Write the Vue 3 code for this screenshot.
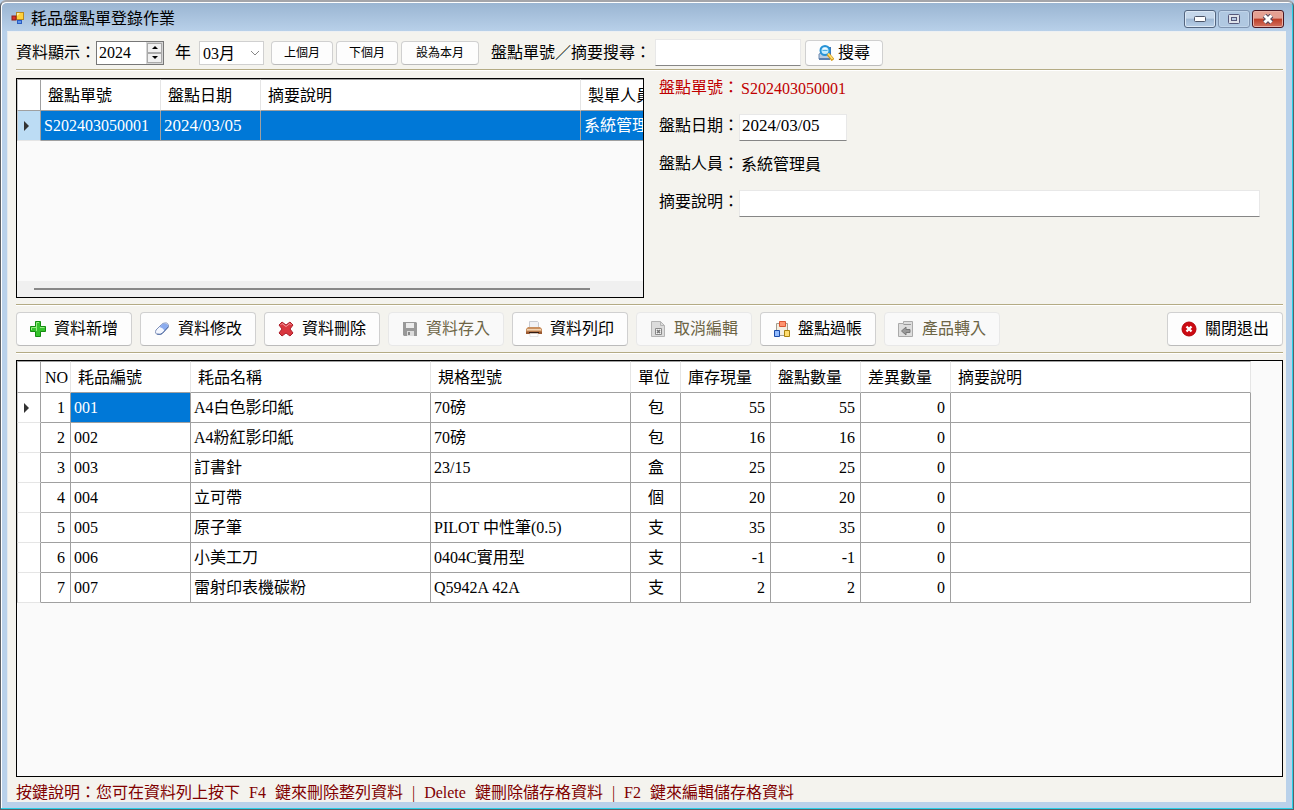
<script setup>
import { ref } from 'vue'

const year = ref(2024)
const month = ref('03月')
const months = Array.from({ length: 12 }, (_, i) => String(i + 1).padStart(2, '0') + '月')
const keyword = ref('')
const sheetDate = ref('2024/03/05')
const summary = ref('')

const jumps = ['上個月', '下個月', '設為本月']

const actions = [
  { icon: 'add', label: '資料新增', disabled: false },
  { icon: 'edit', label: '資料修改', disabled: false },
  { icon: 'remove', label: '資料刪除', disabled: false },
  { icon: 'save', label: '資料存入', disabled: true },
  { icon: 'print', label: '資料列印', disabled: false },
  { icon: 'cancel', label: '取消編輯', disabled: true },
  { icon: 'post', label: '盤點過帳', disabled: false },
  { icon: 'import', label: '產品轉入', disabled: true }
]

const items = [
  { no: 1, code: '001', name: 'A4白色影印紙', spec: '70磅', unit: '包', stock: 55, count: 55, diff: 0 },
  { no: 2, code: '002', name: 'A4粉紅影印紙', spec: '70磅', unit: '包', stock: 16, count: 16, diff: 0 },
  { no: 3, code: '003', name: '訂書針', spec: '23/15', unit: '盒', stock: 25, count: 25, diff: 0 },
  { no: 4, code: '004', name: '立可帶', spec: '', unit: '個', stock: 20, count: 20, diff: 0 },
  { no: 5, code: '005', name: '原子筆', spec: 'PILOT 中性筆(0.5)', unit: '支', stock: 35, count: 35, diff: 0 },
  { no: 6, code: '006', name: '小美工刀', spec: '0404C實用型', unit: '支', stock: -1, count: -1, diff: 0 },
  { no: 7, code: '007', name: '雷射印表機碳粉', spec: 'Q5942A 42A', unit: '支', stock: 2, count: 2, diff: 0 }
]

const hints = ['按鍵說明：您可在資料列上按下', 'F4', '鍵來刪除整列資料', '|', 'Delete', '鍵刪除儲存格資料', '|', 'F2', '鍵來編輯儲存格資料']
</script>

<template>
  <div class="window">
    <header class="titlebar">
      <svg class="app-icon" width="14" height="14" viewBox="0 0 14 14" aria-hidden="true">
        <rect x="5.5" y="1.5" width="7" height="7" fill="#ffd23c" stroke="#b98a1e" />
        <path d="M6 5L9 2H6z" fill="#fff3b0" />
        <rect x="1" y="5" width="4" height="4" fill="#d8322a" stroke="#8c1f1a" />
        <rect x="6.5" y="9.5" width="4" height="3" fill="#5f97ee" stroke="#2a5cc0" />
      </svg>
      <h1>耗品盤點單登錄作業</h1>
      <div class="window-buttons">
        <button type="button" class="win" aria-label="最小化">
          <svg width="12" height="6" viewBox="0 0 12 6"><rect x="0.5" y="0.5" width="11" height="5" rx="1" fill="#fff" stroke="#4c5568" /></svg>
        </button>
        <button type="button" class="win dim" aria-label="最大化">
          <svg width="12" height="10" viewBox="0 0 12 10"><rect x="0.5" y="0.5" width="11" height="9" rx="1" fill="#dfe3ea" stroke="#56587a" /><rect x="3.5" y="3.5" width="5" height="3" fill="#b8cce4" stroke="#56587a" /></svg>
        </button>
        <button type="button" class="win close" aria-label="關閉">
          <svg width="12" height="10" viewBox="0 0 12 10"><path d="M2.500 1.500L9.500 8.500M9.500 1.500L2.500 8.500" stroke="#54485c" stroke-width="5" /><path d="M2.500 1.500L9.500 8.500M9.500 1.500L2.500 8.500" stroke="#fff" stroke-width="3" /></svg>
        </button>
      </div>
    </header>

    <main class="client">
      <form class="filter" @submit.prevent>
        <label for="year">資料顯示：</label>
        <div class="spinner">
          <input id="year" v-model="year" type="text" inputmode="numeric" />
          <div class="spin-buttons">
            <button type="button" aria-label="增加" @click="year++"><svg width="6" height="3" viewBox="0 0 6 3"><path d="M0 3L3 0L6 3z" /></svg></button>
            <button type="button" aria-label="減少" @click="year--"><svg width="6" height="3" viewBox="0 0 6 3"><path d="M0 0L3 3L6 0z" /></svg></button>
          </div>
        </div>
        <label class="year-unit" for="month">年</label>
        <div class="month">
          <select id="month" v-model="month">
            <option v-for="m in months" :key="m">{{ m }}</option>
          </select>
          <svg width="10" height="6" viewBox="0 0 10 6" aria-hidden="true"><path d="M1 1L5 5L9 1" fill="none" stroke="#888" /></svg>
        </div>
        <div class="jumps">
          <button v-for="j in jumps" :key="j" type="button" class="btn small">{{ j }}</button>
        </div>
        <label class="search-label" for="keyword">盤點單號／摘要搜尋：</label>
        <input id="keyword" v-model="keyword" class="field keyword" type="text" />
        <button type="submit" class="btn search">
          <svg width="16" height="16" viewBox="0 0 16 16" aria-hidden="true">
            <path d="M9 2H13V13H10z" fill="#3f72b4" />
            <path d="M1 9L3 8H11L12 14H1z" fill="#b9cbe0" stroke="#6e8bb0" />
            <path d="M1 13H12V15H1z" fill="#5a7fae" />
            <circle cx="7" cy="5.500" r="4.500" fill="#c4edff" stroke="#2793d6" stroke-width="2" />
            <path d="M4.500 5.500H9.500" stroke="#4db1e6" />
            <path d="M5 4Q7 2.500 9 4" fill="none" stroke="#fff" />
            <path d="M10 9L15 15" stroke="#d69a14" stroke-width="3.500" />
            <path d="M10 8.500L14.500 14" stroke="#ffe27a" stroke-width="1.500" />
          </svg>
          <span>搜尋</span>
        </button>
      </form>

      <hr />

      <section class="upper">
        <div class="grid list">
          <table class="list-table">
            <colgroup><col class="c-mark" /><col class="c-code" /><col class="c-date" /><col class="c-memo" /><col class="c-code" /></colgroup>
            <thead>
              <tr><th class="mark"></th><th>盤點單號</th><th>盤點日期</th><th>摘要說明</th><th>製單人員</th></tr>
            </thead>
            <tbody>
              <tr class="picked">
                <td class="mark"><svg width="6" height="10" viewBox="0 0 6 10"><path d="M0 0L5 5L0 10z" fill="#333" /></svg></td>
                <td>S202403050001</td><td class="date">2024/03/05</td><td></td><td>系統管理員</td>
              </tr>
            </tbody>
          </table>
          <div class="scroll"><div class="thumb"></div></div>
        </div>

        <div class="detail">
          <span class="red">盤點單號：</span><span class="red value">S202403050001</span>
          <label for="date">盤點日期：</label><input id="date" v-model="sheetDate" class="field date" type="text" />
          <span>盤點人員：</span><span class="value">系統管理員</span>
          <label for="summary">摘要說明：</label><input id="summary" v-model="summary" class="field" type="text" />
        </div>
      </section>

      <hr />

      <nav class="actions">
        <button v-for="a in actions" :key="a.label" type="button" class="btn action" :disabled="a.disabled">
          <svg width="16" height="16" viewBox="0 0 16 16" aria-hidden="true">
            <g v-if="a.icon === 'add'">
              <path d="M5.500 .5H10.500V5.500H15.500V10.500H10.500V15.500H5.500V10.500H.5V5.500H5.500z" fill="#35c22c" stroke="#138c10" />
              <path d="M6.500 10V1.500H9M1.500 9V6.500H6.500M10 6.500H14.500" fill="none" stroke="#98ec85" />
            </g>
            <g v-else-if="a.icon === 'edit'">
              <path d="M2 9L7.500 3.500Q9 2 11 2H12.500Q15 3 14.500 6L8.500 12.500Q7 14 5 13.500H3.500Q.5 12.500 2 9z" fill="#f4f7ff" stroke="#7d8fb8" />
              <path d="M5.500 6L8.500 3Q12 1.500 14 4V6.500L10.500 10Q9.500 7 5.500 6z" fill="#8bacef" />
              <path d="M3 13Q6.500 14 8.500 12L14 6" fill="none" stroke="#5672a8" />
            </g>
            <g v-else-if="a.icon === 'remove'">
              <path d="M4 1L8 4L12 1L15 4L12 8L15 12L12 15L8 12L4 15L1 12L4 8L1 4z" fill="#d9363e" stroke="#ab1d29" />
              <path d="M2.500 4L4 2.500L8 5.500L12 2.500L13.500 4" fill="none" stroke="#f49a9e" />
            </g>
            <g v-else-if="a.icon === 'save'">
              <path d="M1 1H14L15 2V15H2L1 14z" fill="#999" />
              <path d="M4 2H12V7H4z" fill="#ececec" />
              <path d="M5 10H12V15H5z" fill="#ddd" />
              <path d="M6 11H8V14H6z" fill="#888" />
            </g>
            <g v-else-if="a.icon === 'print'">
              <path d="M3.500 7V.5H11.500L12.500 1.500V7z" fill="#f1f2f5" stroke="#c8cbd2" />
              <path d="M2 6H14L16 8V13H0V8z" fill="#c98f5f" />
              <path d="M1 8H15V9.500H1z" fill="#f2d3b1" />
              <path d="M0 10.500H16V13H0z" fill="#9a5a32" />
              <path d="M3 11H13V12H3z" fill="#321b12" />
              <path d="M4 12.500H12V15.500H4z" fill="#fff" stroke="#d5d5d5" stroke-width=".6" />
            </g>
            <g v-else-if="a.icon === 'cancel'">
              <path d="M1.500 .5H10.500L14.500 4.500V15.500H1.500z" fill="#dcdcdc" stroke="#b4b4b4" />
              <path d="M10.500 .5V4.500H14.500" fill="none" stroke="#b4b4b4" />
              <path d="M5.500 7.500H11.500V13.500H5.500z" fill="#f2f2f2" stroke="#888" />
              <path d="M7 9L10 12M10 9L7 12" stroke="#777" stroke-width="1.500" />
            </g>
            <g v-else-if="a.icon === 'post'">
              <path d="M2.500 2.500H13.500V14.500H2.500z" fill="#f3eee1" stroke="#a29c8e" />
              <path d="M5.500 .5H11.500V5.500H5.500z" fill="#ff936e" stroke="#d95633" />
              <path d="M.5 9.500H5.500V15.500H.5z" fill="#93bcff" stroke="#1c4ca8" />
              <path d="M10.500 9.500H15.500V15.500H10.500z" fill="#ffdd6d" stroke="#a9820d" />
            </g>
            <g v-else>
              <path d="M.5 2.500H5.500V.5H14.500V15.500H.5z" fill="#dedede" stroke="#aaa" />
              <path d="M5.500 3.500H13" stroke="#999" />
              <path d="M3.500 10L8 6V8.500H12V11.500H8V14z" fill="#999" stroke="#777" />
            </g>
          </svg>
          <span>{{ a.label }}</span>
        </button>
        <button type="button" class="btn action exit">
          <svg width="16" height="16" viewBox="0 0 16 16" aria-hidden="true">
            <circle cx="8" cy="8" r="7" fill="#cc0a12" stroke="#b30008" />
            <path d="M5.500 5.500L10.500 10.500M10.500 5.500L5.500 10.500" stroke="#fff" stroke-width="2.400" />
          </svg>
          <span>關閉退出</span>
        </button>
      </nav>

      <hr />

      <section class="grid items">
        <table class="items-table">
          <colgroup><col class="c-mark" /><col class="c-no" /><col class="c-code" /><col class="c-name" /><col class="c-spec" /><col class="c-unit" /><col class="c-qty" /><col class="c-qty" /><col class="c-qty" /><col class="c-note" /></colgroup>
          <thead>
            <tr>
              <th class="mark"></th><th class="no">NO</th><th>耗品編號</th><th>耗品名稱</th><th>規格型號</th><th>單位</th><th>庫存現量</th><th>盤點數量</th><th>差異數量</th><th>摘要說明</th>
            </tr>
          </thead>
          <tbody>
            <tr v-for="(r, i) in items" :key="r.code">
              <td class="mark"><svg v-if="i === 0" width="6" height="10" viewBox="0 0 6 10"><path d="M0 0L5 5L0 10z" fill="#333" /></svg></td>
              <td class="num">{{ r.no }}</td>
              <td :class="{ selected: i === 0 }">{{ r.code }}</td>
              <td>{{ r.name }}</td>
              <td>{{ r.spec }}</td>
              <td class="center">{{ r.unit }}</td>
              <td class="num">{{ r.stock }}</td>
              <td class="num">{{ r.count }}</td>
              <td class="num">{{ r.diff }}</td>
              <td></td>
            </tr>
          </tbody>
        </table>
      </section>

      <footer><span v-for="(h, i) in hints" :key="i">{{ h }}</span></footer>
    </main>
  </div>
</template>

<style>
body {
  background: #b9d1ea;
}
</style>

<style scoped>
* {
  box-sizing: border-box;
}
.window {
  display: flex;
  flex-direction: column;
  height: 100vh;
  padding: 0 7px 7px 6px;
  border: 1px solid #5c6066;
  border-top: 2px solid #a4a5aa;
  border-radius: 6px 6px 0 0;
  box-shadow: inset -1px -1px #28cfe6, inset 1px 1px #fff;
  background: linear-gradient(#99b4d1, #b9d1ea 30px);
  font-family: "Liberation Serif", "Noto Sans CJK TC", sans-serif;
  font-size: 16px;
  line-height: 24px;
  color: #000;
}
input,
select,
button {
  font: inherit;
  color: inherit;
}
.titlebar {
  display: flex;
  align-items: center;
  height: 29px;
  flex: none;
  padding: 4px 2px 0 4px;
}
.app-icon {
  margin-bottom: 1px;
}
h1 {
  margin: 0 auto 0 6px;
  font-size: 16px;
  line-height: 24px;
  font-weight: 400;
}
.window-buttons {
  display: flex;
  gap: 2px;
}
.win {
  display: flex;
  align-items: center;
  justify-content: center;
  width: 32px;
  height: 18px;
  padding: 0;
  border: 1px solid #53657f;
  border-radius: 3px;
  background: linear-gradient(#c5d7ea 45%, #9fb8d4 50%, #b8cfe8);
  box-shadow: inset 0 0 0 1px #dce8f5;
}
.win.dim {
  border-color: #7f94b0;
  background: #b0c8e1;
  box-shadow: inset 0 0 0 1px #c1d5ea;
}
.win.close {
  border-color: #4b1621;
  background: linear-gradient(#e5a092 45%, #bd3d26 50%, #d37260);
  box-shadow: inset 0 0 0 1px #e9b0a5;
}
.client {
  flex: 1;
  min-height: 0;
  display: flex;
  flex-direction: column;
  padding: 0 3px 0 8px;
  border-top: 1px solid #edf0f3;
  border-left: 1px solid #e4e9ee;
  background: #f4f3ee;
}
hr {
  flex: none;
  width: 100%;
  height: 2px;
  margin: 0;
  border: 0;
  border-top: 1px solid #b4ab84;
  background: #fff;
}
.filter {
  display: flex;
  align-items: center;
  height: 37px;
  flex: none;
  padding-top: 4px;
  white-space: nowrap;
}
.spinner {
  display: flex;
  width: 68px;
  height: 24px;
  border: 1px solid #777;
  background: #fff;
}
.spinner input {
  flex: 1;
  min-width: 0;
  padding: 0 2px;
  border: 0;
  background: transparent;
}
.spin-buttons {
  display: flex;
  flex-direction: column;
  width: 17px;
  border: 1px solid #d5d5d5;
  background: #eee;
}
.spin-buttons button {
  flex: 1;
  display: flex;
  align-items: center;
  justify-content: center;
  padding: 0;
  border: 1px solid #aaa;
  background: #f0f0f0;
}
.year-unit {
  margin: 0 8px 0 11px;
}
.month {
  display: grid;
  align-items: center;
  width: 65px;
  height: 24px;
  border: 1px solid #d0d0d0;
  background: #fff;
}
.month select {
  grid-area: 1 / 1;
  appearance: none;
  width: 100%;
  height: 22px;
  padding: 0 3px;
  border: 0;
  background: transparent;
}
.month svg {
  grid-area: 1 / 1;
  justify-self: end;
  margin-right: 3px;
  pointer-events: none;
}
.jumps {
  display: flex;
  gap: 3px;
  margin: 0 12px 0 7px;
}
.btn {
  display: flex;
  align-items: center;
  justify-content: center;
  gap: 8px;
  padding: 0;
  border: 1px solid #d0d0d0;
  border-bottom-color: #bbb;
  border-radius: 4px;
  background: #fdfdfd;
  white-space: nowrap;
}
.btn.small {
  height: 24px;
  padding: 0 12px;
  font-size: 12px;
}
.btn.small:nth-child(-n + 2) {
  min-width: 62px;
}
.btn.small:last-child {
  min-width: 78px;
}
.field {
  height: 27px;
  min-width: 0;
  padding: 0 2px 2px;
  border: 1px solid #e8e8e8;
  border-bottom-color: #868686;
  background: #fff;
}
.keyword {
  width: 146px;
  margin: 0 4px;
}
.btn.search {
  width: 78px;
  height: 26px;
  gap: 4px;
}
.upper {
  flex: none;
  display: grid;
  grid-template-columns: minmax(0, 628fr) minmax(0, 624fr);
  column-gap: 15px;
  height: 233px;
}
.grid {
  border: 1px solid #000;
  background: #fafafa;
  overflow: hidden;
}
.list {
  display: flex;
  flex-direction: column;
  margin: 7px 0 6px;
}
table {
  table-layout: fixed;
  border-collapse: separate;
  border-spacing: 0;
  background: #fff;
}
.list-table {
  width: 684px;
}
.items-table {
  width: 1234px;
}
.c-mark { width: 24px; }
.c-no { width: 30px; }
.c-code { width: 120px; }
.c-date { width: 100px; }
.c-memo { width: 320px; }
.c-name { width: 240px; }
.c-spec { width: 200px; }
.c-unit { width: 50px; }
.c-qty { width: 90px; }
.c-note { width: 300px; }
th,
td {
  padding: 1px 2px 0 3px;
  border-right: 1px solid #a0a0a0;
  border-bottom: 1px solid #a0a0a0;
  font-weight: 400;
  text-align: left;
  white-space: nowrap;
  overflow: hidden;
}
th {
  height: 32px;
  padding: 2px 0 0 7px;
  border-top: 1px solid #a0a0a0;
  border-right-color: #e5e5e5;
}
td {
  height: 30px;
}
th.no {
  padding-left: 4px;
}
.mark {
  padding: 0 0 0 6px;
  border-left: 1px solid #c8c8c8;
  border-right-color: #a0a0a0;
}
td.mark {
  border-bottom-color: #e5e5e5;
}
td.mark svg {
  display: block;
}
.picked {
  background: #0078d7;
  color: #fff;
}
.picked .mark {
  background: #bcdcf4;
}
.date {
  font-size: 17px;
}
.selected {
  background: #0078d7;
  color: #fff;
}
.num {
  text-align: right;
  padding-right: 5px;
}
.center {
  text-align: center;
}
.scroll {
  display: flex;
  align-items: center;
  height: 16px;
  margin-top: auto;
  padding: 0 53px 0 17px;
  background: #f0f0f0;
}
.thumb {
  flex: 1;
  height: 2px;
  background: #888;
}
.detail {
  display: grid;
  grid-template-columns: max-content minmax(0, 1fr);
  grid-auto-rows: 38px;
  align-content: start;
  align-items: center;
  padding-right: 23px;
}
.detail span,
.detail label {
  padding-bottom: 4px;
}
.detail .value {
  padding: 0 0 2px 2px;
}
.detail .field {
  margin-bottom: 2px;
}
.detail .date {
  width: 108px;
}
.red {
  color: #c00000;
}
.actions {
  flex: none;
  display: flex;
  gap: 8px;
  align-items: center;
  height: 46px;
}
.action {
  width: 116px;
  height: 34px;
}
.action:disabled {
  color: #6d6546;
  border-color: #e8e8e8;
  background: #f9f9f9;
}
.exit {
  margin-left: auto;
}
.items {
  flex: 1;
  min-height: 0;
  margin-top: 6px;
}
footer {
  flex: none;
  display: flex;
  gap: 9px;
  height: 25px;
  padding-top: 4px;
  color: #800000;
  white-space: nowrap;
}
</style>
